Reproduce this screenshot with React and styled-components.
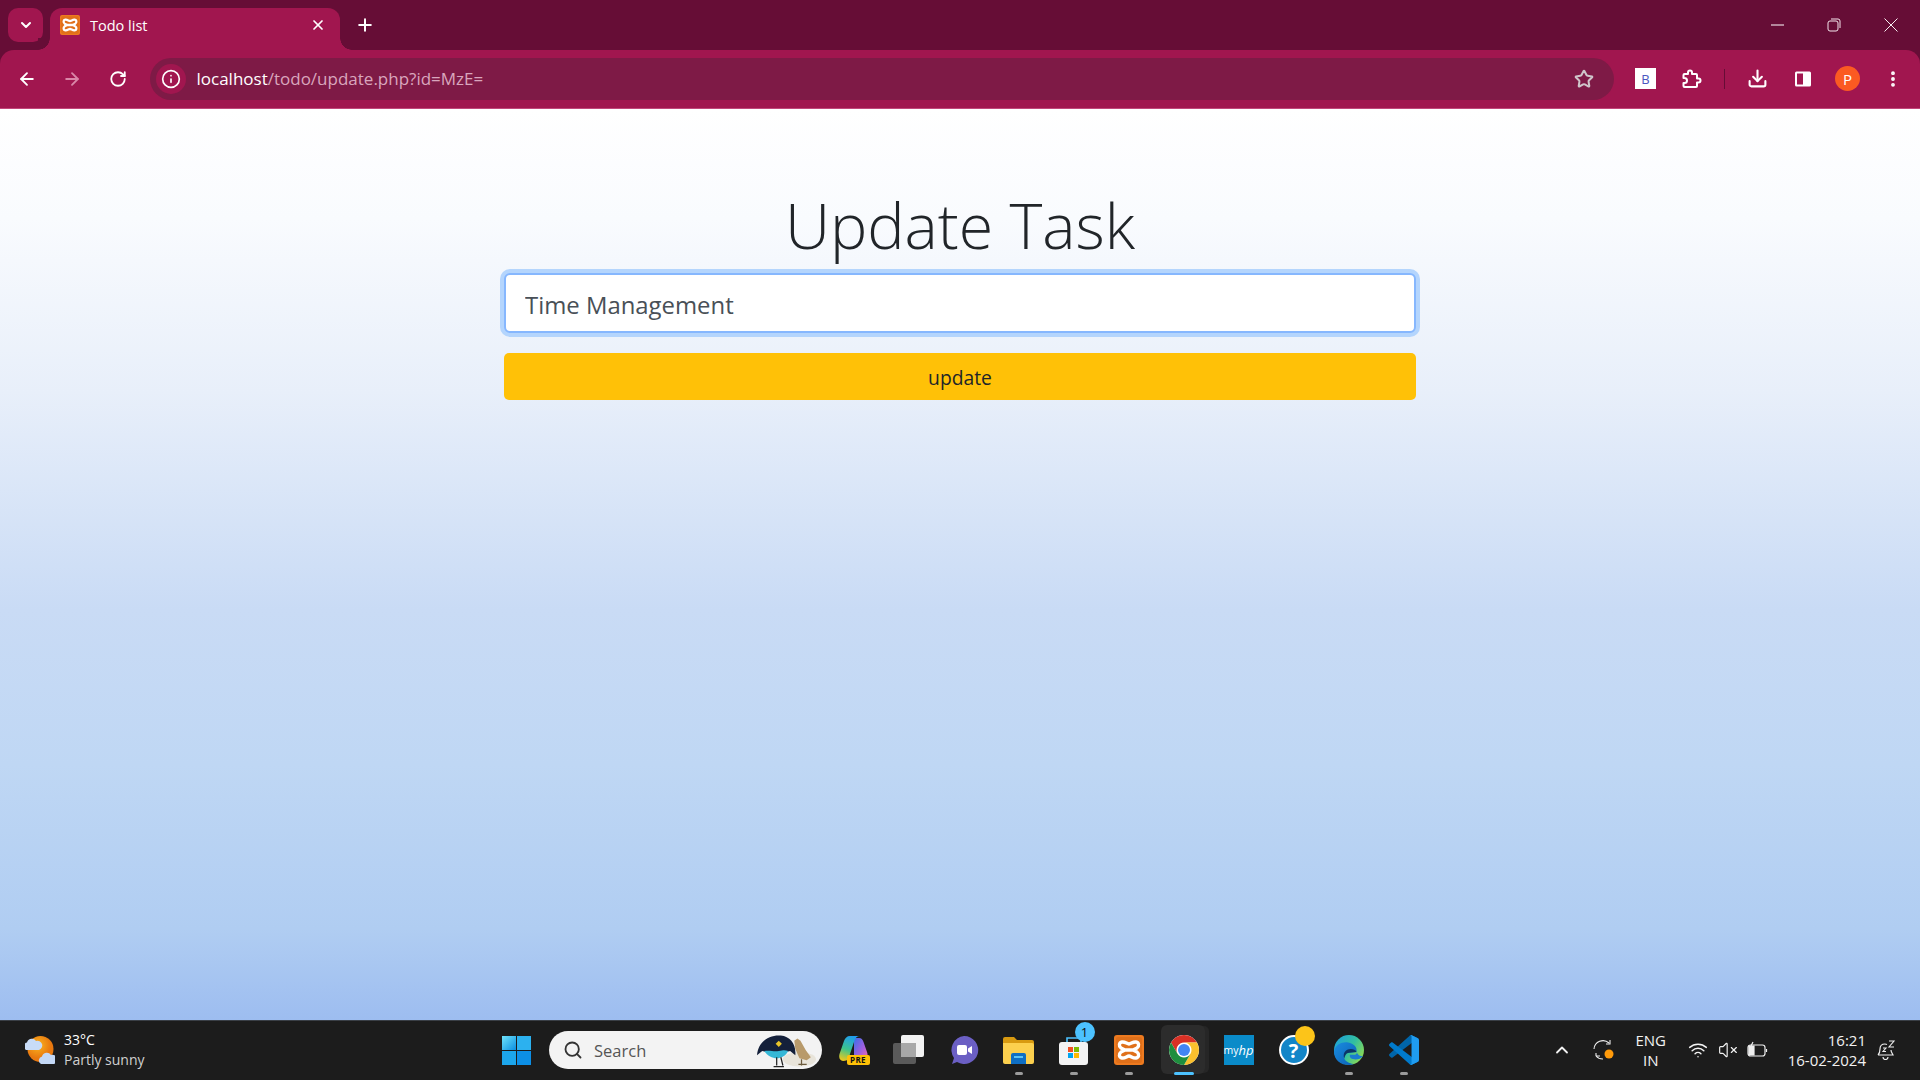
import React from "react";
import styled, { createGlobalStyle } from "styled-components";
import { ArrowLeft, ArrowRight, RotateCw, Info, Star, Download, EllipsisVertical, ChevronDown, ChevronUp, Plus, X, Search, Wifi, VolumeX } from "lucide-react";

const Global = createGlobalStyle`
  html, body { margin: 0; padding: 0; height: 100%; overflow: hidden; }
  * { box-sizing: border-box; }
  body { font-family: "Open Sans", "Noto Sans", sans-serif; }
`;
const Screen = styled.div`width:1920px;height:1080px;display:flex;flex-direction:column;overflow:hidden;background:#660d36;`;
const TabStrip = styled.div`height:50px;display:flex;align-items:flex-end;padding-left:8px;color:#fff;`;
const TabMenu = styled.div`width:35px;height:34px;margin-bottom:8px;border-radius:10px;background:#a1164f;display:flex;align-items:center;justify-content:center;`;
const Tab = styled.div`
  width:290px;height:42px;margin-left:7px;background:#a1164f;border-radius:12px 12px 0 0;display:flex;align-items:center;padding:0 14px 8px 10px;font-size:14.5px;gap:10px;position:relative;
  &::before,&::after{content:"";position:absolute;bottom:0;width:12px;height:12px;}
  &::before{left:-12px;background:radial-gradient(circle at 0 0,#660d36 11.5px,#a1164f 12px);}
  &::after{right:-12px;background:radial-gradient(circle at 100% 0,#660d36 11.5px,#a1164f 12px);}
`;
const TabTitle = styled.span`flex:1;`;
const NewTab = styled.div`width:50px;height:42px;padding-bottom:8px;display:flex;align-items:center;justify-content:center;`;
const WindowControls = styled.div`margin-left:auto;height:50px;display:flex;align-items:center;`;
const WinBtn = styled.div`width:${p=>p.$w||56}px;height:50px;display:flex;align-items:center;justify-content:center;`;
const Toolbar = styled.div`height:59px;background:#a1164f;border-radius:14px 14px 0 0;display:flex;align-items:center;padding:0 5px 1px 4px;color:#fff;border-bottom:1px solid #c2467a;`;
const NavBtn = styled.div`width:45.5px;height:42px;display:flex;align-items:center;justify-content:center;color:${p=>p.$dim?"#d987a8":"#fff"};`;
const Omni = styled.div`flex:1;height:42px;margin:0 9px 0 9px;background:#7e1a46;border-radius:21px;display:flex;align-items:center;padding:0 20px 0 6px;font-size:17px;`;
const InfoChip = styled.div`width:30px;height:30px;border-radius:50%;background:#a1164f;display:flex;align-items:center;justify-content:center;margin-right:11px;`;
const Host = styled.span`color:#fff;`;
const Path = styled.span`color:#d9a6bd;`;
const Url = styled.div`flex:1;white-space:nowrap;`;
const ToolSlot = styled.div`width:45px;height:42px;display:flex;align-items:center;justify-content:center;`;
const ExtB = styled.div`width:21px;height:21px;background:#fff;color:#4a55c0;font-size:13px;display:flex;align-items:center;justify-content:center;`;
const Divider = styled.div`width:1px;height:20px;background:#660d36;margin:0 10px 0 11px;`;
const Avatar = styled.div`width:25px;height:25px;border-radius:50%;background:#fb5a22;color:#fff;font-size:15px;display:flex;align-items:center;justify-content:center;`;
const Page = styled.main`flex:1;display:flex;flex-direction:column;align-items:center;background:linear-gradient(180deg,#fff 0%,#f9fbfe 12%,#e8effa 31%,#c9dbf5 55%,#bfd7f4 72%,#b0cdf2 90%,#9dbdf0 100%);`;
const Title = styled.h1`margin:78px 0 0;font-weight:300;font-size:62.7px;line-height:76px;height:76px;color:#212529;font-family:"Open Sans",sans-serif;`;
const Form = styled.form`width:912px;margin-top:10px;display:flex;flex-direction:column;gap:20px;`;
const Field = styled.input`height:60px;width:100%;border:2px solid #86b7fe;border-radius:6px;box-shadow:0 0 0 4px #b4d5fd;background:#fff;padding:2px 19px 0;font:23.9px "Open Sans",sans-serif;color:#495057;outline:none;`;
const Submit = styled.button`height:47px;width:100%;border:0;border-radius:5px;background:#ffc107;color:#212529;font:19.3px "Open Sans",sans-serif;padding:2px 0 0;`;
const Taskbar = styled.footer`height:60px;background:#1c1c1c;border-top:1px solid #3a3f46;padding-bottom:1px;display:grid;grid-template-columns:minmax(0,1fr) auto minmax(0,1fr);align-items:center;color:#fff;`;
const Weather = styled.div`display:flex;align-items:center;padding-left:25px;gap:9px;font-size:14px;line-height:20px;`;
const WeatherSub = styled.div`color:#d0d0d0;`;
const Center = styled.div`display:flex;align-items:center;height:100%;`;
const Slot = styled.div`width:55px;height:58px;display:flex;align-items:center;justify-content:center;position:relative;`;
const StartSlot = styled(Slot)`margin-right:5px;`;
const Lit = styled.div`position:absolute;left:5px;top:4px;width:44px;height:49px;background:#2c2c2c;border-radius:6px;box-shadow:5px 0 0 -1px #262626;`;
const Dot = styled.div`position:absolute;bottom:4px;left:50%;transform:translateX(-50%);width:${p=>p.$on?20:8}px;height:3px;border-radius:2px;background:${p=>p.$on?"#4cc2ff":"#9b9b9b"};`;
const IconWrap = styled.div`position:relative;width:30px;height:30px;display:flex;`;
const SearchBox = styled.div`width:273px;height:38px;border-radius:19px;background:#f3f3f3;display:flex;align-items:center;padding:0 6px 0 14px;color:#555;font-size:16.5px;margin-right:4px;`;
const SearchLabel = styled.span`flex:1;margin-left:11px;`;
const StoreBadge = styled.div`position:absolute;top:-13px;right:-6px;width:20px;height:20px;border-radius:50%;background:#4cc2ff;color:#111;font-size:13px;display:flex;align-items:center;justify-content:center;`;
const PreBadge = styled.div`position:absolute;bottom:0;right:-1px;width:23px;height:10px;background:#ffc107;border-radius:2px;color:#111;font-size:8px;font-weight:700;line-height:10px;text-align:center;letter-spacing:.4px;`;
const MyHp = styled.div`width:30px;height:30px;background:#0a8bc9;color:#fff;font-size:10.5px;display:flex;align-items:center;justify-content:center;`;
const HpItalic = styled.i`font-size:13px;`;
const HelpDisc = styled.div`width:30px;height:30px;border-radius:50%;background:#1285c8;border:2px solid #fff;color:#fff;font-weight:700;font-size:20px;display:flex;align-items:center;justify-content:center;`;
const HelpDot = styled.div`position:absolute;top:-9px;right:-6px;width:20px;height:20px;border-radius:50%;background:#fcc419;`;
const Tray = styled.div`display:flex;align-items:center;justify-content:flex-end;height:100%;color:#f2f2f2;font-size:15px;`;
const TrayIcon = styled.div`display:flex;align-items:center;justify-content:center;width:${p=>p.$w}px;margin-right:${p=>p.$mr||0}px;`;
const Lang = styled.div`width:32px;text-align:center;line-height:20px;margin-right:20px;`;
const Clock = styled.div`text-align:right;line-height:20px;margin-right:8px;`;
const Bell = styled.div`width:24px;margin-right:22px;display:flex;justify-content:center;`;

const Xampp = ({ s = 20 }) => (
  <svg width={s} height={s} viewBox="0 0 30 30"><rect width="30" height="30" rx="3" fill="#ed7a1f"/><rect x="2" y="2" width="26" height="26" rx="2" fill="#e0701a"/>
  <path d="M15 9C13 9 11 6.500 8 7 5 7.500 4.500 11 7 13L11 15 7 17C4.500 19 5 22.500 8 23 11 23.500 13 21 15 21 17 21 19 23.500 22 23 25 22.500 25.500 19 23 17L19 15 23 13C25.500 11 25 7.500 22 7 19 6.500 17 9 15 9ZM11 15H19" fill="none" stroke="#fff" strokeWidth="3.400" strokeLinejoin="round"/></svg>
);
const PuzzleIcon = () => (<svg width="24" height="24" viewBox="0 0 24 24" fill="none" stroke="#fff" strokeWidth="2" strokeLinejoin="round"><path d="M5.500 7H9V5.500a2 2 0 0 1 4 0V7h4a1 1 0 0 1 1 1v3.500h1.500a2 2 0 0 1 0 4H18V19a1 1 0 0 1-1 1H5.500a1 1 0 0 1-1-1v-3h1a2.500 2.500 0 0 0 0-5h-1V8a1 1 0 0 1 1-1z"/></svg>);
const Sidepanel = () => (<svg width="18" height="18" viewBox="0 0 18 18"><rect x="1" y="1.500" width="16" height="15" rx="1.500" fill="#fff"/><rect x="3" y="3.500" width="6" height="11" fill="#a1164f"/></svg>);
const MinIcon = () => (<svg width="14" height="14" viewBox="0 0 14 14"><path d="M0 7h13" stroke="#fff"/></svg>);
const Restore = () => (<svg width="14" height="14" viewBox="0 0 14 14" fill="none" stroke="#f4e6ec"><rect x="1" y="3" width="10" height="10" rx="2"/><path d="M4 1h7a2 2 0 0 1 2 2v7"/></svg>);
const CloseIcon = () => (<svg width="14" height="14" viewBox="0 0 14 14"><path d="M.5.500l13 13M13.500.5l-13 13" stroke="#f8eef2"/></svg>);
const WeatherIcon = () => (<svg width="30" height="30" viewBox="0 0 30 30"><defs><radialGradient id="sun" cx=".4" cy=".35"><stop offset="0" stopColor="#fbb520"/><stop offset="1" stopColor="#e8780f"/></radialGradient></defs><circle cx="15.500" cy="14" r="13" fill="url(#sun)"/><path d="M4 12a4 4 0 0 1 1-7.500 5 5 0 0 1 9-1.500 4 4 0 0 1 3 9z" fill="#c8dcf7" transform="translate(-3,3)"/><path d="M4 12a4 4 0 0 1 1-7.500 5 5 0 0 1 9-1.500 4 4 0 0 1 3 9z" fill="#c3d8f6" transform="translate(12,17)"/></svg>);
const StartIcon = () => (<svg width="29" height="29" viewBox="0 0 29 29"><defs><linearGradient id="w1" x1="0" y1="0" x2="1" y2="1"><stop offset="0" stopColor="#6fe3fb"/><stop offset="1" stopColor="#0b8fe0"/></linearGradient></defs><rect width="14" height="14" fill="url(#w1)"/><rect x="15" width="14" height="14" fill="#2cb1ef"/><rect y="15" width="14" height="14" fill="#1ca6ec"/><rect x="15" y="15" width="14" height="14" fill="#0c8fe6"/></svg>);
const Bird = () => (<svg width="60" height="36" viewBox="0 0 58 34"><ellipse cx="42" cy="26" rx="16" ry="7" fill="#e8e4da"/><path d="M1 22C2 8 14 2 24 3c9 1 15 8 14 19l-5-4-8 2H14L6 18z" fill="#14203a"/><path d="M8 18c6-1 9 1 14 0s6-1 9 0c-2 5-7 7-11 7s-9-2-12-7z" fill="#35b7d6"/><path d="M20 24v8M24 24l2 8M17 33h10" stroke="#222" strokeWidth="1.200" fill="none"/><path d="M19 11l3-3 3 3-3 3z" fill="#e8c52a"/><path d="M37 8l3-2 3 2 5 9 5 7-4 3-7-2-4-9z" fill="#b89a6b"/><path d="M44 26v6M41 31h8" stroke="#6b5a3c" strokeWidth="1.200" fill="none"/></svg>);
const Copilot = () => (<svg width="29" height="29" viewBox="0 0 29 29"><defs><linearGradient id="c1" x1=".6" y1="0" x2=".3" y2="1"><stop offset="0" stopColor="#1f9cf0"/><stop offset=".55" stopColor="#3cc48c"/><stop offset="1" stopColor="#e8c820"/></linearGradient><linearGradient id="c2" x1="0" y1="0" x2="1" y2="1"><stop offset="0" stopColor="#3a6fe8"/><stop offset=".55" stopColor="#a060e0"/><stop offset="1" stopColor="#f46aa8"/></linearGradient></defs><path d="M15 3h5c2.500 0 3.500 1.500 4.500 4L28 17c1.500 4 0 8-4 8h-9z" fill="url(#c2)"/><path d="M11 1h10c-3 0-4.500 1.500-5.500 4.500L10 22c-1 3-3 4-6 4C1 26-.5 23 .5 19L5 6c1-3 3-5 6-5z" fill="url(#c1)"/></svg>);
const TaskView = () => (<svg width="31" height="30" viewBox="0 0 31 30"><rect x="0" y="8" width="23" height="21" rx="2" fill="#5a5a5a"/><rect x="8" y="0" width="23" height="22" rx="2" fill="#f2f2f2"/><rect x="8" y="8" width="15" height="14" fill="#a8a8a8"/></svg>);
const Chat = () => (<svg width="30" height="30" viewBox="0 0 30 30"><path d="M15 1a14 14 0 1 1-7 26l-5 2 2-6A14 14 0 0 1 15 1z" fill="#6b5fc4"/><rect x="8" y="10" width="10" height="10" rx="2" fill="#fff"/><path d="M19 13.500l4-2.500v8l-4-2.500z" fill="#fff"/></svg>);
const Explorer = () => (<svg width="31" height="28" viewBox="0 0 31 28"><path d="M0 3a2 2 0 0 1 2-2h9l3 3h15a2 2 0 0 1 2 2v3H0z" fill="#d89a10"/><path d="M0 7h29a2 2 0 0 1 2 2v17a2 2 0 0 1-2 2H2a2 2 0 0 1-2-2z" fill="#fcd04e"/><path d="M8 28v-9a2 2 0 0 1 2-2h11a2 2 0 0 1 2 2v9z" fill="#0f6fc4"/><rect x="11" y="20" width="9" height="2" fill="#5cc4f5"/></svg>);
const Store = () => (<svg width="30" height="30" viewBox="0 0 30 30"><path d="M8 7V3h14v4" fill="none" stroke="#4cc2ff" strokeWidth="1.600"/><rect y="7" width="29" height="23" rx="3" fill="#f3f3f3"/><rect x="9" y="12" width="5" height="5" fill="#f25022"/><rect x="15" y="12" width="5" height="5" fill="#7fba00"/><rect x="9" y="18" width="5" height="5" fill="#00a4ef"/><rect x="15" y="18" width="5" height="5" fill="#ffb900"/></svg>);
const Chrome = () => (<svg width="30" height="30" viewBox="4 4 40 40"><circle cx="24" cy="24" r="20" fill="#fff"/><path d="M6.700 14A20 20 0 0 1 41.300 14H24A10 10 0 0 0 15.340 29Z" fill="#d93025"/><path d="M41.300 14A20 20 0 0 1 24 44L32.660 29A10 10 0 0 0 24 14Z" fill="#fbc02d"/><path d="M24 44A20 20 0 0 1 6.700 14L15.340 29A10 10 0 0 0 32.660 29Z" fill="#1e8e3e"/><circle cx="24" cy="24" r="8" fill="#4285f4"/></svg>);
const Edge = () => (<svg width="30" height="30" viewBox="0 0 32 32"><defs><linearGradient id="e1" x1="0" y1="0" x2="1" y2=".6"><stop offset="0" stopColor="#1b9de2"/><stop offset=".6" stopColor="#32bfa0"/><stop offset="1" stopColor="#86d858"/></linearGradient><linearGradient id="e2" x1="0" y1="0" x2="1" y2="1"><stop offset="0" stopColor="#1a8ce0"/><stop offset="1" stopColor="#0b5fb4"/></linearGradient></defs><circle cx="16" cy="16" r="16" fill="url(#e1)"/><path d="M0 18C1 10 9 7 15 8c6 1 10 5 9 10l-8 1c-4 0-6 3-5 6 1 3 5 5 10 6-2 1-4 1-5 1C7 32 0 26 0 18z" fill="url(#e2)"/><path d="M24 18c1 2-1 3-3 3h-4c-1 3 2 5 6 5 3 0 6-1 8-4-3 1-5 0-7-4z" fill="#1a7cd0"/><path d="M11 25c-2-5 1-10 7-10 3 0 5 1 6 3l-8 1c-3 0-4 3-5 6z" fill="#0c3568"/></svg>);
const VsCode = () => (<svg width="30" height="30" viewBox="0 0 100 100"><path d="M96.500 10.800 75.900.9c-2.400-1.200-5.200-.7-7.100 1.200L1.400 63.600c-1.800 1.700-1.800 4.500 0 6.100l5.500 5c1.500 1.300 3.700 1.400 5.300.2L93.400 13.600c2.700-2 6.600-.1 6.600 3.300v-.2c0-2.400-1.400-4.600-3.500-5.900z" fill="#0065A9"/><path d="M96.500 89.200 75.900 99.100c-2.400 1.200-5.200.7-7.100-1.200L1.400 36.400c-1.800-1.700-1.800-4.500 0-6.100l5.500-5c1.500-1.300 3.700-1.400 5.300-.2L93.400 86.400c2.700 2 6.600.1 6.600-3.300v.2c0 2.400-1.400 4.600-3.500 5.900z" fill="#007ACC"/><path d="M75.900 99.100c-2.400 1.200-5.200.6-7.100-1.200 2.300 2.300 6.300.7 6.300-2.600V4.700c0-3.300-4-4.900-6.300-2.600 1.900-1.900 4.700-2.400 7.100-1.200l20.600 9.900c2.200 1 3.500 3.200 3.500 5.600v67.200c0 2.400-1.400 4.600-3.500 5.600z" fill="#1F9CF0"/></svg>);
const Sync = () => (<svg width="22" height="22" viewBox="0 0 22 22" fill="none" stroke="#eee" strokeWidth="1.100"><path d="M1 10a9 9 0 0 1 15-6"/><path d="M17 1v4h-4"/><path d="M3 17h4M3 17v-3"/><path d="M3 17a9 9 0 0 0 7 3"/><circle cx="16" cy="15" r="4.500" fill="#ff9a0a" stroke="none"/></svg>);
const Battery = () => (<svg width="21" height="18" viewBox="0 0 21 18" fill="none" stroke="#eee" strokeWidth="1.200"><rect x="1" y="4" width="17" height="11" rx="2.500"/><path d="M19.500 8v3"/><path d="M2 5h5v9H2z" fill="#eee"/><path d="M6 1L3 7h3l-1 4" stroke="#eee"/></svg>);
const BellIcon = () => (<svg width="20" height="20" viewBox="0 0 20 20" fill="none" stroke="#eee" strokeWidth="1.200"><path d="M2 15c2-2 2-3 2-6 0-3 2-5 5-5 1 0 1 0 2 .5M15 10c0 2 1 3 2 5H2"/><path d="M7 17a2.500 2.500 0 0 0 5 0"/><path d="M7 8h3l-3 3.500h3M13 1h5l-5 6h5" strokeWidth="1.100"/></svg>);

export default function App() {
  return (
    <Screen>
      <Global />
      <TabStrip>
        <TabMenu><ChevronDown size={16} strokeWidth={3}/></TabMenu>
        <Tab><Xampp /><TabTitle>Todo list</TabTitle><X size={16} strokeWidth={2.600}/></Tab>
        <NewTab><Plus size={20} strokeWidth={2.400}/></NewTab>
        <WindowControls>
          <WinBtn><MinIcon/></WinBtn>
          <WinBtn><Restore/></WinBtn>
          <WinBtn $w={58}><CloseIcon/></WinBtn>
        </WindowControls>
      </TabStrip>
      <Toolbar>
        <NavBtn><ArrowLeft size={20} strokeWidth={2.200}/></NavBtn>
        <NavBtn $dim><ArrowRight size={20} strokeWidth={2.200}/></NavBtn>
        <NavBtn><RotateCw size={18} strokeWidth={2.400}/></NavBtn>
        <Omni>
          <InfoChip><Info size={20} strokeWidth={2}/></InfoChip>
          <Url><Host>localhost</Host><Path>/todo/update.php?id=MzE=</Path></Url>
          <Star size={20} color="#cfc5ca" strokeWidth={2.400}/>
        </Omni>
        <ToolSlot><ExtB>B</ExtB></ToolSlot>
        <ToolSlot><PuzzleIcon/></ToolSlot>
        <Divider/>
        <ToolSlot><Download size={21} strokeWidth={2.400}/></ToolSlot>
        <ToolSlot><Sidepanel/></ToolSlot>
        <ToolSlot><Avatar>P</Avatar></ToolSlot>
        <ToolSlot><EllipsisVertical size={20} strokeWidth={2.600}/></ToolSlot>
      </Toolbar>
      <Page>
        <Title>Update Task</Title>
        <Form onSubmit={e=>e.preventDefault()}>
          <Field defaultValue="Time Management"/>
          <Submit>update</Submit>
        </Form>
      </Page>
      <Taskbar>
        <Weather>
          <WeatherIcon/>
          <div><div>33°C</div><WeatherSub>Partly sunny</WeatherSub></div>
        </Weather>
        <Center>
          <StartSlot><StartIcon/></StartSlot>
          <SearchBox><Search size={20} color="#333" strokeWidth={2.200}/><SearchLabel>Search</SearchLabel><Bird/></SearchBox>
          <Slot><IconWrap><Copilot/><PreBadge>PRE</PreBadge></IconWrap></Slot>
          <Slot><TaskView/></Slot>
          <Slot><Chat/></Slot>
          <Slot><Explorer/><Dot/></Slot>
          <Slot><IconWrap><Store/><StoreBadge>1</StoreBadge></IconWrap><Dot/></Slot>
          <Slot><Xampp s={30}/><Dot/></Slot>
          <Slot><Lit/><IconWrap><Chrome/></IconWrap><Dot $on/></Slot>
          <Slot><MyHp>my<HpItalic>hp</HpItalic></MyHp></Slot>
          <Slot><IconWrap><HelpDisc>?</HelpDisc><HelpDot/></IconWrap></Slot>
          <Slot><Edge/><Dot/></Slot>
          <Slot><VsCode/><Dot/></Slot>
        </Center>
        <Tray>
          <TrayIcon $w={20} $mr={21}><ChevronUp size={20} strokeWidth={2.200}/></TrayIcon>
          <TrayIcon $w={22} $mr={19.5}><Sync/></TrayIcon>
          <Lang><div>ENG</div><div>IN</div></Lang>
          <TrayIcon $w={22} $mr={8}><Wifi size={20} strokeWidth={1.800}/></TrayIcon>
          <TrayIcon $w={22} $mr={8}><VolumeX size={20} strokeWidth={1.400}/></TrayIcon>
          <TrayIcon $w={22} $mr={19}><Battery/></TrayIcon>
          <Clock><div>16:21</div><div>16-02-2024</div></Clock>
          <Bell><BellIcon/></Bell>
        </Tray>
      </Taskbar>
    </Screen>
  );
}
